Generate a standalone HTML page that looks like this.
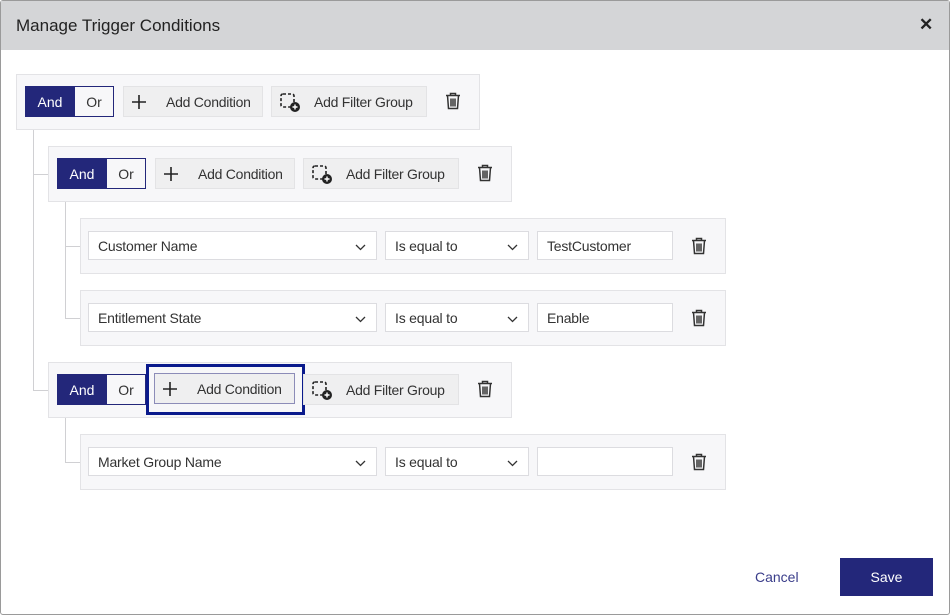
<!DOCTYPE html>
<html><head><meta charset="utf-8"><style>
*{box-sizing:border-box;margin:0;padding:0}
body{width:950px;height:615px;position:relative;background:#fff;font-family:"Liberation Sans",Arial,sans-serif;font-size:14px;color:#333;overflow:hidden}
.a{position:absolute}
.frame{left:0;top:0;width:950px;height:615px;border:1px solid #9a9a9a;border-radius:3px}
.hdr{left:1px;top:1px;width:948px;height:49px;background:#d4d5d7}
.title{left:16px;top:16px;font-size:17px;color:#222}
.x{left:919px;top:15px;font-size:17px;font-weight:bold;color:#222}
.grp{background:#f7f7f9;border:1px solid #e3e3e6}
.and{background:#23277a;color:#fff;border:1px solid #23277a;display:flex;align-items:center;justify-content:center;height:31px;width:50px}
.or{background:#f7f7f9;color:#333;border:1px solid #23277a;border-left:none;display:flex;align-items:center;justify-content:center;height:31px;width:39px}
.btn{background:#efeff0;border:1px solid #e3e3e5;height:31px;display:flex;align-items:center;color:#333}
.btn span{top:7px;letter-spacing:-0.25px}
.sel{background:#fff;border:1px solid #dcdce0;height:29px;display:flex;align-items:center;padding-left:9px;color:#333;letter-spacing:-0.2px}
.chev{position:absolute;right:10px;top:8px}
.line{background:#d0d0d3}
</style></head><body>
<div class="a frame"></div>
<div class="a hdr"></div>
<div class="a title">Manage Trigger Conditions</div>
<div class="a x">✕</div>

<div class="a line" style="left:33px;top:129px;width:1px;height:262px"></div>
<div class="a line" style="left:33px;top:174px;width:15px;height:1px"></div>
<div class="a line" style="left:33px;top:390px;width:15px;height:1px"></div>
<div class="a line" style="left:65px;top:201px;width:1px;height:118px"></div>
<div class="a line" style="left:65px;top:246px;width:15px;height:1px"></div>
<div class="a line" style="left:65px;top:318px;width:15px;height:1px"></div>
<div class="a line" style="left:65px;top:417px;width:1px;height:46px"></div>
<div class="a line" style="left:65px;top:462px;width:15px;height:1px"></div>

<div class="a grp" style="left:16px;top:74px;width:464px;height:56px"></div>
<div class="a grp" style="left:48px;top:146px;width:464px;height:56px"></div>
<div class="a grp" style="left:80px;top:218px;width:646px;height:56px"></div>
<div class="a grp" style="left:80px;top:290px;width:646px;height:56px"></div>
<div class="a grp" style="left:48px;top:362px;width:464px;height:56px"></div>
<div class="a grp" style="left:80px;top:434px;width:646px;height:56px"></div>

<svg width="0" height="0" style="position:absolute">
<defs>
<g id="trash"><path d="M1 3.5h14M5.5 3.5V1.5h5v2M2.5 3.5l1 13h9l1-13M6 6.5v8M8 6.5v8M10 6.5v8" fill="none" stroke="#333" stroke-width="1.5"/></g>
<g id="plus"><path d="M8 1v14M1 8h14" stroke="#222" stroke-width="1.6"/></g>
<g id="fg"><rect x="1" y="1" width="13" height="13" rx="2" fill="none" stroke="#222" stroke-width="1.6" stroke-dasharray="3 2"/><circle cx="15" cy="14" r="5" fill="#222"/><path d="M15 11.5v5M12.5 14h5" stroke="#fff" stroke-width="1.4"/></g>
<g id="chev"><path d="M1 1l4.5 4.5L10 1" fill="none" stroke="#333" stroke-width="1.3"/></g>
</defs></svg>

<div class="a and" style="left:25px;top:86px">And</div><div class="a or" style="left:75px;top:86px">Or</div>
<div class="a btn" style="left:123px;top:86px;width:140px"><svg class="a" style="left:7px;top:7px" width="16" height="16"><use href="#plus"/></svg><span class="a" style="left:42px">Add Condition</span></div>
<div class="a btn" style="left:271px;top:86px;width:156px"><svg class="a" style="left:8px;top:6px" width="22" height="21"><use href="#fg"/></svg><span class="a" style="left:42px">Add Filter Group</span></div>
<svg class="a" style="left:445px;top:92px" width="16" height="18"><use href="#trash"/></svg>

<div class="a and" style="left:57px;top:158px">And</div><div class="a or" style="left:107px;top:158px">Or</div>
<div class="a btn" style="left:155px;top:158px;width:140px"><svg class="a" style="left:7px;top:7px" width="16" height="16"><use href="#plus"/></svg><span class="a" style="left:42px">Add Condition</span></div>
<div class="a btn" style="left:303px;top:158px;width:156px"><svg class="a" style="left:8px;top:6px" width="22" height="21"><use href="#fg"/></svg><span class="a" style="left:42px">Add Filter Group</span></div>
<svg class="a" style="left:477px;top:164px" width="16" height="18"><use href="#trash"/></svg>

<div class="a and" style="left:57px;top:374px">And</div><div class="a or" style="left:107px;top:374px">Or</div>
<div class="a" style="left:146px;top:364px;width:159px;height:51px;border:3px solid #0a1a8c"></div>
<div class="a btn" style="left:154px;top:373px;width:141px;border-color:#8c8cb8"><svg class="a" style="left:7px;top:7px" width="16" height="16"><use href="#plus"/></svg><span class="a" style="left:42px">Add Condition</span></div>
<div class="a btn" style="left:303px;top:374px;width:156px"><svg class="a" style="left:8px;top:6px" width="22" height="21"><use href="#fg"/></svg><span class="a" style="left:42px">Add Filter Group</span></div>
<svg class="a" style="left:477px;top:380px" width="16" height="18"><use href="#trash"/></svg>

<div class="a sel" style="left:88px;top:231px;width:289px">Customer Name<svg class="chev" width="11" height="7" style="top:12px"><use href="#chev"/></svg></div>
<div class="a sel" style="left:385px;top:231px;width:144px">Is equal to<svg class="chev" width="11" height="7" style="top:12px"><use href="#chev"/></svg></div>
<div class="a sel" style="left:537px;top:231px;width:136px">TestCustomer</div>
<svg class="a" style="left:691px;top:237px" width="16" height="18"><use href="#trash"/></svg>

<div class="a sel" style="left:88px;top:303px;width:289px">Entitlement State<svg class="chev" width="11" height="7" style="top:12px"><use href="#chev"/></svg></div>
<div class="a sel" style="left:385px;top:303px;width:144px">Is equal to<svg class="chev" width="11" height="7" style="top:12px"><use href="#chev"/></svg></div>
<div class="a sel" style="left:537px;top:303px;width:136px">Enable</div>
<svg class="a" style="left:691px;top:309px" width="16" height="18"><use href="#trash"/></svg>

<div class="a sel" style="left:88px;top:447px;width:289px">Market Group Name<svg class="chev" width="11" height="7" style="top:12px"><use href="#chev"/></svg></div>
<div class="a sel" style="left:385px;top:447px;width:144px">Is equal to<svg class="chev" width="11" height="7" style="top:12px"><use href="#chev"/></svg></div>
<div class="a sel" style="left:537px;top:447px;width:136px"></div>
<svg class="a" style="left:691px;top:453px" width="16" height="18"><use href="#trash"/></svg>

<div class="a" style="left:755px;top:569px;color:#3a3d8a">Cancel</div>
<div class="a" style="left:840px;top:558px;width:93px;height:38px;background:#23277a;color:#fff;display:flex;align-items:center;justify-content:center">Save</div>
</body></html>
